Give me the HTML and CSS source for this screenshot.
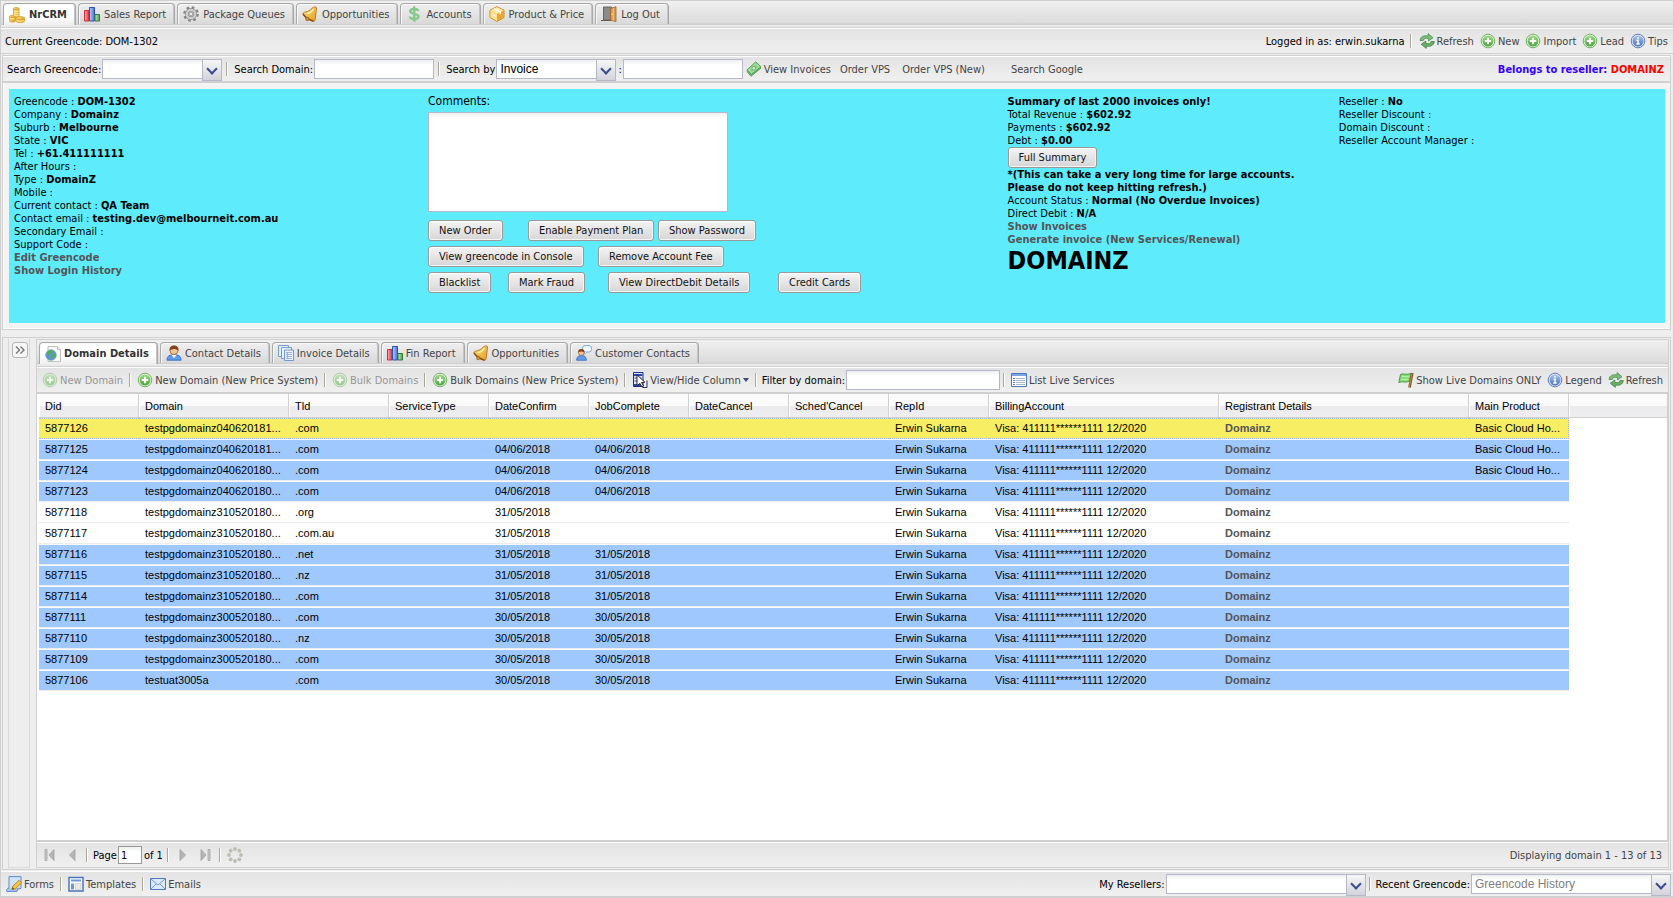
FILE: index.html
```html
<!DOCTYPE html>
<html lang="en">
<head>
<meta charset="utf-8">
<title>NrCRM</title>
<link rel="stylesheet" href="styles.css">
</head>
<body>
<svg class="sprite" aria-hidden="true">
  <defs>
    <linearGradient id="gold" x1="0" y1="0" x2="1" y2="1"><stop offset="0" stop-color="#ffe68a"/><stop offset="1" stop-color="#dd9a1c"/></linearGradient>
    <linearGradient id="green" x1="0" y1="0" x2="0" y2="1"><stop offset="0" stop-color="#9ddb8a"/><stop offset="1" stop-color="#4ea63c"/></linearGradient>
    <linearGradient id="blue" x1="0" y1="0" x2="0" y2="1"><stop offset="0" stop-color="#a9c3ee"/><stop offset="1" stop-color="#4a74bd"/></linearGradient>
    <linearGradient id="redbar" x1="0" y1="0" x2="1" y2="0"><stop offset="0" stop-color="#ffb0b0"/><stop offset="1" stop-color="#e0303c"/></linearGradient>
    <linearGradient id="bluebar" x1="0" y1="0" x2="1" y2="0"><stop offset="0" stop-color="#b5d0ff"/><stop offset="1" stop-color="#4a70d0"/></linearGradient>
    <linearGradient id="greenbar" x1="0" y1="0" x2="1" y2="0"><stop offset="0" stop-color="#c0e8b8"/><stop offset="1" stop-color="#4f9f52"/></linearGradient>
  </defs>
  <symbol id="coins" viewBox="0 0 16 16"><g fill="url(#gold)" stroke="#d6a02c" stroke-width=".8"><path d="M4.500 1.800v11.700h5.500V1.800z"/><ellipse cx="7.200" cy="1.800" rx="2.800" ry="1.300"/><path d="M.6 9.500v4.700c0 1.200 5.600 1.200 5.600 0V9.500z"/><ellipse cx="3.400" cy="9.500" rx="2.800" ry="1.200"/><path d="M7 11.300v2.900c0 1.700 8.500 1.700 8.500 0v-2.900z"/><ellipse cx="11.200" cy="11.200" rx="4.300" ry="1.700"/></g><path d="M5 4.300h4.500M5 6.300h4.500M5 8.300h4.500M1 11.800h4.500M7.500 13.600c2 .7 5.500.7 7.500 0" stroke="#fff0a8" stroke-width=".8" fill="none"/></symbol>
  <symbol id="chart" viewBox="0 0 16 16"><path d="M.5 4.500h4.500v10.500H.5z" fill="url(#redbar)" stroke="#c9303c"/><path d="M5.500 1.500h5v13.500h-5z" fill="url(#bluebar)" stroke="#2c4fb4"/><path d="M11 8.500h4.500v6.500H11z" fill="url(#greenbar)" stroke="#2d7f3a"/></symbol>
  <symbol id="gear" viewBox="0 0 16 16"><circle cx="8" cy="8" r="6.500" fill="none" stroke="#858585" stroke-width="2.600" stroke-dasharray="2.500 2.600"/><circle cx="8" cy="8" r="4.200" fill="none" stroke="#8c8c8c" stroke-width="3.600"/><circle cx="8" cy="8" r="4.200" fill="none" stroke="#cfcfcf" stroke-width="2.200"/><circle cx="8" cy="8" r="1.900" fill="#eee" stroke="#858585" stroke-width=".8"/></symbol>
  <symbol id="bell" viewBox="0 0 16 16"><path d="M12.500 1c1.700-.4 2.500.6 1.900 2l-1 9.500c-.2 1.900-.8 2.900-1.900 2.700C7.500 14.200 3 11.200 1 8c-.4-1.400.9-1.700 2.500-2C6.500 5.300 8 4.300 10 2.300c.8-.8 1.600-1.200 2.500-1.300z" fill="url(#gold)" stroke="#b9741a" stroke-width=".9"/><path d="M1 8c2.300 3.300 6 6 10.500 7.200" fill="none" stroke="#8b4d10" stroke-width="1.500"/><path d="M11.500 3.300C10 5.500 7.800 6.900 5.300 7.500" fill="none" stroke="#fff4bb" stroke-width="1.300"/><circle cx="5.300" cy="13" r="1.700" fill="#d89128" stroke="#92560f" stroke-width=".7"/></symbol>
  <symbol id="dollar" viewBox="0 0 16 16"><path d="M12.300 5C12 2.400 4.300 2.200 4.300 5.300c0 3.200 8.300 2 8.300 5.300 0 3.400-8.300 3-8.800 0M8.200.3v15.500" fill="none" stroke="#86c98c" stroke-width="2.500"/></symbol>
  <symbol id="box" viewBox="0 0 16 16"><path d="M8 .7l7 3.500v7.300l-7 3.900-7-3.900V4.200z" fill="#f5c24d" stroke="#ca8b2a"/><path d="M1.500 4.500L8 8v7l-6.500-3.700z" fill="#fbdf93"/><path d="M8 8l6.500-3.500v6.800L8 15z" fill="#e9a637"/><path d="M1.500 4.300L8 1.200l6.500 3.100L8 7.700z" fill="#ffeaae"/><path d="M5 2.700l6.300 3.200v2.400M4 8.700l2.500 1.500" stroke="#fff" fill="none" stroke-width="1.200"/></symbol>
  <symbol id="door" viewBox="0 0 16 16"><path d="M2.500 1h8v13h-8z" fill="#8b8b8b" stroke="#666"/><path d="M0 14.500h11" stroke="#6d5a45"/><path d="M9.500 2.500L15 .7v14.800l-5.500-1.300z" fill="#d99a54" stroke="#9a6428" stroke-width=".8"/><path d="M12.300 2v12.500" stroke="#f3c68a"/><circle cx="11.200" cy="8.300" r=".9" fill="#ffe14f"/></symbol>
  <symbol id="refresh" viewBox="0 0 16 16"><path d="M1 7.500C1.300 3.500 5 2 9 3V.6L14 4.700 9.500 8V5.700C6.500 4.900 4.800 5.300 4.300 7.500z" fill="#7dbb7b" stroke="#3f8a45" stroke-width=".7"/><path d="M15.300 8.500c-.3 4-4 5.500-8 4.500v2.400L2.200 11.300 6.800 8v2.300c3 .8 4.700.4 5.200-1.800z" fill="#6aae69" stroke="#377c3e" stroke-width=".7"/></symbol>
  <symbol id="add" viewBox="0 0 16 16"><circle cx="8" cy="8" r="6.800" fill="#e6f3e2" stroke="#68aa5c" stroke-width=".9"/><circle cx="8" cy="8" r="5.500" fill="url(#green)"/><path d="M8 4.800v6.400M4.800 8h6.400" stroke="#fff" stroke-width="2"/></symbol>
  <symbol id="info" viewBox="0 0 16 16"><circle cx="8" cy="8" r="6.800" fill="#e2eaf7" stroke="#5273ad" stroke-width=".9"/><circle cx="8" cy="8" r="5.500" fill="url(#blue)"/><path d="M8 4v1.700M6.500 7.300H8v3.500M6.300 11h3.400" stroke="#fff" stroke-width="1.500" fill="none"/></symbol>
  <symbol id="money" viewBox="0 0 16 16"><path d="M1 10.500L10 2l5 5L5 15.300z" fill="#7dbf7a" stroke="#438f45" stroke-width=".8"/><path d="M.8 9L9.800.8l5.200 5-9.600 7.700z" fill="#8fce8b" stroke="#4b9a4c" stroke-width=".8"/><path d="M3 9l6.700-6.200L12.800 6l-7.200 5.500z" fill="none" stroke="#c5eac2" stroke-width=".7"/><circle cx="7.800" cy="7.200" r="1.900" fill="#c7ecc4" stroke="#5aa85a" stroke-width=".8"/></symbol>
  <symbol id="page-globe" viewBox="0 0 16 16"><path d="M3 .6h9.500l3 3v11.800H3z" fill="#fff" stroke="#bbb"/><path d="M12.500.6v3h3" fill="#eee" stroke="#bbb"/><circle cx="6" cy="9" r="5.300" fill="#5d94d6" stroke="#7aa6a6" stroke-width=".8"/><path d="M3 5.500c2-1.500 4-.8 5 0l-1 2-2.500.5L3.500 10 2 7zM8 8.500l2.600-.7-.3 3.300-2.300 2L7 11z" fill="#52b04b"/></symbol>
  <symbol id="user" viewBox="0 0 16 16"><path d="M1 15.200C1 10.500 4 9.800 8 9.800s7 .7 7 5.400z" fill="#5d9bec" stroke="#2c62b6" stroke-width=".8"/><path d="M5.500 10h5L8 13.200z" fill="#f4f8ff"/><circle cx="8" cy="5.500" r="4" fill="#f3c393" stroke="#8c5221" stroke-width=".7"/><path d="M3.700 6C3 1.800 5.500.5 8 .5s5.200 1.400 4.400 5.500C11 4.300 9 3.900 7 4.200 5.500 4.300 4.300 4.900 3.700 6z" fill="#834316"/></symbol>
  <symbol id="pages" viewBox="0 0 16 16"><g fill="#e9f1fc" stroke="#7398d3"><path d="M.5.5h10v11H.5z"/><path d="M3.500 2.500h10v11h-10z"/><path d="M6.500 5h9v10.500h-9z"/></g><path d="M8 7.500h6M8 9.500h6M8 11.500h6M8 13.500h6M9.500 7v7" stroke="#89abdc" stroke-width=".8"/></symbol>
  <symbol id="talk" viewBox="0 0 16 16"><rect x="6.500" y=".6" width="9" height="6.400" rx="2.500" fill="#eef6ff" stroke="#82a9d4"/><path d="M9 6.500L8.500 9.300l3-2.600" fill="#eef6ff" stroke="#82a9d4" stroke-width=".7"/><path d="M.7 15.300c0-3.800 2-4.800 4.800-4.800s4.800 1 4.800 4.800z" fill="#5d9bec" stroke="#2c62b6" stroke-width=".7"/><circle cx="5.300" cy="7.600" r="2.900" fill="#f3c393" stroke="#8c5221" stroke-width=".6"/><path d="M2.300 7.500C1.800 5 3.300 4 5.300 4s3.500 1 3 3.500C6.300 6 4.300 6 2.300 7.500z" fill="#834316"/></symbol>
  <symbol id="columns" viewBox="0 0 16 16"><path d="M1.500.5H11v14H1.500z" fill="#dfe5ff" stroke="#1c2e8e"/><path d="M2 2h8.500v2H2zM2 12h8.500v2H2z" fill="#2f48ae"/><path d="M2.500 6h7M2.500 9h7" stroke="#3a54b8" stroke-width="1.200"/><path d="M5 2.800l7.800 7.400-3.200.3 1.900 3.600-1.700.8-1.800-3.500L5 13.600z" fill="#fff" stroke="#111" stroke-width=".9"/><path d="M10.500 15.500H15V8.500" fill="none" stroke="#26346f"/></symbol>
  <symbol id="list" viewBox="0 0 16 16"><path d="M.5 1.500h15v13H.5z" fill="#fff" stroke="#4c78bd"/><path d="M1 2h14v2H1z" fill="#7ba4e0"/><path d="M2 6.500h2M2 8.500h2M2 10.500h2M2 12.500h2" stroke="#4d84d6"/><path d="M5 6.500h9M5 8.500h9M5 10.500h9M5 12.500h9" stroke="#a9b6c9"/></symbol>
  <symbol id="flag" viewBox="0 0 16 16"><path d="M2.500 2.500C5 .8 8 3.500 13 1.500L11.300 9.300C7.500 11.200 4.500 8.800.8 10.500z" fill="#86da78" stroke="#3f9440" stroke-width=".9"/><path d="M4 4.500c2-.6 4.500 1 7.500-.3M3.300 7.300c2-.4 4 .8 6.500 0" stroke="#c5f3bc" fill="none"/><path d="M14.300 1L11.500 15.500" stroke="#7f5220" stroke-width="2.600"/><path d="M14 1.500L11.400 15" stroke="#c58b47"/></symbol>
  <symbol id="form" viewBox="0 0 16 16"><path d="M3 .6h12v11.900L3 14z" fill="#cfe2f8" stroke="#5a8dc6"/><path d="M3 12c-2 .5-3 2-2.200 3.400H11l1-2.500" fill="#a8c8ee" stroke="#5a8dc6"/><path d="M6 13.500L6.800 10 13 4.300l2.500 2.500L9.300 13z" fill="#f6c443" stroke="#b97b16" stroke-width=".8"/><path d="M6 13.500l.6-2.500 1.800 1.900z" fill="#6d4a1a"/></symbol>
  <symbol id="template" viewBox="0 0 16 16"><path d="M1 1.500h14v13.500H1z" fill="#fff" stroke="#4a76ba" stroke-width="1.500"/><path d="M3 3.500h10v2H3zM3 7.500h3v6H3z" fill="#6b97dc"/><path d="M7.500 7.500h5.500v6H7.500z" fill="#ecebe7" stroke="#bbb" stroke-width=".6"/></symbol>
  <symbol id="mail" viewBox="0 0 16 16"><path d="M.5 2.500h15v11H.5z" fill="#dce9fb" stroke="#4f79bd"/><path d="M1 3l7 6 7-6M1 13l5-5M15 13l-5-5" fill="none" stroke="#7298d4"/></symbol>
  <symbol id="first" viewBox="0 0 16 16"><path d="M3 2.500h2v11H3z" fill="#c9c9c9" stroke="#9b9b9b" stroke-width=".7"/><path d="M12 2.500v11L7 8z" fill="#b5b5b5" stroke="#999" stroke-width=".7"/></symbol>
  <symbol id="prev" viewBox="0 0 16 16"><path d="M11 2.500v11L5.500 8z" fill="#b5b5b5" stroke="#999" stroke-width=".7"/></symbol>
  <symbol id="next" viewBox="0 0 16 16"><path d="M5 2.500v11L10.500 8z" fill="#b5b5b5" stroke="#999" stroke-width=".7"/></symbol>
  <symbol id="last" viewBox="0 0 16 16"><path d="M11 2.500h2v11h-2z" fill="#c9c9c9" stroke="#9b9b9b" stroke-width=".7"/><path d="M4 2.500v11L9 8z" fill="#b5b5b5" stroke="#999" stroke-width=".7"/></symbol>
  <symbol id="loading" viewBox="0 0 16 16"><g fill="#bdbdb4"><circle cx="8" cy="2" r="1.900"/><circle cx="12.300" cy="3.700" r="1.900"/><circle cx="14" cy="8" r="1.900"/><circle cx="12.300" cy="12.300" r="1.900"/><circle cx="8" cy="14" r="1.900"/><circle cx="3.700" cy="12.300" r="1.900"/><circle cx="2" cy="8" r="1.900"/><circle cx="3.700" cy="3.700" r="1.900"/></g></symbol>
  <symbol id="expand" viewBox="0 0 16 16"><rect x=".5" y=".5" width="15" height="15" rx="2.500" fill="#f6f6f6" stroke="#b4b4b4"/><path d="M4 4.500L7.500 8 4 11.500M8.500 4.500L12 8l-3.500 3.500" fill="none" stroke="#777" stroke-width="1.400"/></symbol>
</svg>

<div class="app">
  <nav class="tabs">
    <button class="tab active"><svg class="icon"><use href="#coins"/></svg>NrCRM</button>
    <button class="tab"><svg class="icon"><use href="#chart"/></svg>Sales Report</button>
    <button class="tab"><svg class="icon"><use href="#gear"/></svg>Package Queues</button>
    <button class="tab"><svg class="icon"><use href="#bell"/></svg>Opportunities</button>
    <button class="tab"><svg class="icon"><use href="#dollar"/></svg>Accounts</button>
    <button class="tab"><svg class="icon"><use href="#box"/></svg>Product &amp; Price</button>
    <button class="tab"><svg class="icon"><use href="#door"/></svg>Log Out</button>
  </nav>

  <div class="toolbar">
    <span class="text">Current Greencode:</span><span class="text">DOM-1302</span>
    <span class="fill"></span>
    <span class="text">Logged in as:</span><span class="text">erwin.sukarna</span>
    <i class="sep"></i>
    <button class="btn"><svg class="icon"><use href="#refresh"/></svg>Refresh</button>
    <button class="btn"><svg class="icon"><use href="#add"/></svg>New</button>
    <button class="btn"><svg class="icon"><use href="#add"/></svg>Import</button>
    <button class="btn"><svg class="icon"><use href="#add"/></svg>Lead</button>
    <button class="btn"><svg class="icon"><use href="#info"/></svg>Tips</button>
  </div>

  <div class="center">
    <section class="customer">
      <div class="toolbar heavy">
        <label class="text" for="s-green">Search Greencode:</label>
        <span class="combo"><select id="s-green"><option></option></select></span>
        <i class="sep"></i>
        <label class="text" for="s-domain">Search Domain:</label>
        <input class="field" id="s-domain" type="text">
        <i class="sep"></i>
        <label class="text" for="s-by">Search by</label>
        <span class="combo"><select id="s-by"><option>Invoice</option></select></span>
        <label class="text" for="s-value">:</label>
        <input class="field" id="s-value" type="text">
        <button class="btn"><svg class="icon"><use href="#money"/></svg>View Invoices</button>
        <button class="btn plain">Order VPS</button>
        <button class="btn plain">Order VPS (New)</button>
        <button class="btn plain spaced">Search Google</button>
        <span class="fill"></span>
        <span class="reseller">Belongs to reseller: <em>DOMAINZ</em></span>
      </div>
      <div class="summary">
        <div class="summary-body">
          <div class="info">
            <div>Greencode : <b>DOM-1302</b></div>
            <div>Company : <b>Domainz</b></div>
            <div>Suburb : <b>Melbourne</b></div>
            <div>State : <b>VIC</b></div>
            <div>Tel : <b>+61.411111111</b></div>
            <div>After Hours :</div>
            <div>Type : <b>DomainZ</b></div>
            <div>Mobile :</div>
            <div>Current contact : <b>QA Team</b></div>
            <div>Contact email : <b>testing.dev@melbourneit.com.au</b></div>
            <div>Secondary Email :</div>
            <div>Support Code :</div>
            <div><a href="#edit">Edit Greencode</a></div>
            <div><a href="#history">Show Login History</a></div>
          </div>
          <div class="actions">
            <label for="comments">Comments:</label>
            <textarea id="comments"></textarea>
            <div class="row orders"><button class="push">New Order</button><button class="push">Enable Payment Plan</button><button class="push">Show Password</button></div>
            <div class="row console"><button class="push">View greencode in Console</button><button class="push">Remove Account Fee</button></div>
            <div class="row billing"><button class="push">Blacklist</button><button class="push">Mark Fraud</button><button class="push">View DirectDebit Details</button><button class="push">Credit Cards</button></div>
          </div>
          <div class="info">
            <div><b>Summary of last 2000 invoices only!</b></div>
            <div>Total Revenue : <b>$602.92</b></div>
            <div>Payments : <b>$602.92</b></div>
            <div>Debt : <b>$0.00</b></div>
            <button class="push">Full Summary</button>
            <div><b>*(This can take a very long time for large accounts.<br>Please do not keep hitting refresh.)</b></div>
            <div>Account Status : <b>Normal (No Overdue Invoices)</b></div>
            <div>Direct Debit : <b>N/A</b></div>
            <div><a href="#invoices">Show Invoices</a></div>
            <div><a href="#generate">Generate invoice (New Services/Renewal)</a></div>
            <h1>DOMAINZ</h1>
          </div>
          <div class="info">
            <div>Reseller : <b>No</b></div>
            <div>Reseller Discount :</div>
            <div>Domain Discount :</div>
            <div>Reseller Account Manager :</div>
          </div>
        </div>
      </div>
    </section>

    <section class="details">
      <aside class="collapsed"><button class="expander" aria-label="Expand"><svg class="icon"><use href="#expand"/></svg></button></aside>
      <div class="main">
        <nav class="tabs">
          <button class="tab active"><svg class="icon"><use href="#page-globe"/></svg>Domain Details</button>
          <button class="tab"><svg class="icon"><use href="#user"/></svg>Contact Details</button>
          <button class="tab"><svg class="icon"><use href="#pages"/></svg>Invoice Details</button>
          <button class="tab"><svg class="icon"><use href="#chart"/></svg>Fin Report</button>
          <button class="tab"><svg class="icon"><use href="#bell"/></svg>Opportunities</button>
          <button class="tab"><svg class="icon"><use href="#talk"/></svg>Customer Contacts</button>
        </nav>
        <div class="toolbar heavy">
          <button class="btn" disabled><svg class="icon"><use href="#add"/></svg>New Domain</button>
          <i class="sep"></i>
          <button class="btn"><svg class="icon"><use href="#add"/></svg>New Domain (New Price System)</button>
          <i class="sep"></i>
          <button class="btn" disabled><svg class="icon"><use href="#add"/></svg>Bulk Domains</button>
          <i class="sep"></i>
          <button class="btn"><svg class="icon"><use href="#add"/></svg>Bulk Domains (New Price System)</button>
          <i class="sep"></i>
          <button class="btn menu"><svg class="icon"><use href="#columns"/></svg>View/Hide Column</button>
          <i class="sep"></i>
          <label class="text" for="filter">Filter by domain:</label>
          <input class="field filter" id="filter" type="text">
          <i class="sep"></i>
          <button class="btn"><svg class="icon"><use href="#list"/></svg>List Live Services</button>
          <span class="fill"></span>
          <button class="btn"><svg class="icon"><use href="#flag"/></svg>Show Live Domains ONLY</button>
          <button class="btn"><svg class="icon"><use href="#info"/></svg>Legend</button>
          <button class="btn"><svg class="icon"><use href="#refresh"/></svg>Refresh</button>
        </div>
        <div class="grid">
          <table>
            <colgroup><col class="w100"><col class="w150"><col class="w100" span="7"><col class="w230"><col class="w250"><col class="w100"><col></colgroup>
            <thead><tr><th>Did</th><th>Domain</th><th>Tld</th><th>ServiceType</th><th>DateConfirm</th><th>JobComplete</th><th>DateCancel</th><th>Sched'Cancel</th><th>RepId</th><th>BillingAccount</th><th>Registrant Details</th><th>Main Product</th><td></td></tr></thead>
            <tbody>
              <tr class="selected"><td>5877126</td><td>testpgdomainz040620181...</td><td>.com</td><td></td><td></td><td></td><td></td><td></td><td>Erwin Sukarna</td><td>Visa: 411111******1111 12/2020</td><td><a href="#r">Domainz</a></td><td>Basic Cloud Ho...</td><td></td></tr>
              <tr class="done"><td>5877125</td><td>testpgdomainz040620181...</td><td>.com</td><td></td><td>04/06/2018</td><td>04/06/2018</td><td></td><td></td><td>Erwin Sukarna</td><td>Visa: 411111******1111 12/2020</td><td><a href="#r">Domainz</a></td><td>Basic Cloud Ho...</td><td></td></tr>
              <tr class="done"><td>5877124</td><td>testpgdomainz040620180...</td><td>.com</td><td></td><td>04/06/2018</td><td>04/06/2018</td><td></td><td></td><td>Erwin Sukarna</td><td>Visa: 411111******1111 12/2020</td><td><a href="#r">Domainz</a></td><td>Basic Cloud Ho...</td><td></td></tr>
              <tr class="done"><td>5877123</td><td>testpgdomainz040620180...</td><td>.com</td><td></td><td>04/06/2018</td><td>04/06/2018</td><td></td><td></td><td>Erwin Sukarna</td><td>Visa: 411111******1111 12/2020</td><td><a href="#r">Domainz</a></td><td></td><td></td></tr>
              <tr><td>5877118</td><td>testpgdomainz310520180...</td><td>.org</td><td></td><td>31/05/2018</td><td></td><td></td><td></td><td>Erwin Sukarna</td><td>Visa: 411111******1111 12/2020</td><td><a href="#r">Domainz</a></td><td></td><td></td></tr>
              <tr><td>5877117</td><td>testpgdomainz310520180...</td><td>.com.au</td><td></td><td>31/05/2018</td><td></td><td></td><td></td><td>Erwin Sukarna</td><td>Visa: 411111******1111 12/2020</td><td><a href="#r">Domainz</a></td><td></td><td></td></tr>
              <tr class="done"><td>5877116</td><td>testpgdomainz310520180...</td><td>.net</td><td></td><td>31/05/2018</td><td>31/05/2018</td><td></td><td></td><td>Erwin Sukarna</td><td>Visa: 411111******1111 12/2020</td><td><a href="#r">Domainz</a></td><td></td><td></td></tr>
              <tr class="done"><td>5877115</td><td>testpgdomainz310520180...</td><td>.nz</td><td></td><td>31/05/2018</td><td>31/05/2018</td><td></td><td></td><td>Erwin Sukarna</td><td>Visa: 411111******1111 12/2020</td><td><a href="#r">Domainz</a></td><td></td><td></td></tr>
              <tr class="done"><td>5877114</td><td>testpgdomainz310520180...</td><td>.com</td><td></td><td>31/05/2018</td><td>31/05/2018</td><td></td><td></td><td>Erwin Sukarna</td><td>Visa: 411111******1111 12/2020</td><td><a href="#r">Domainz</a></td><td></td><td></td></tr>
              <tr class="done"><td>5877111</td><td>testpgdomainz300520180...</td><td>.com</td><td></td><td>30/05/2018</td><td>30/05/2018</td><td></td><td></td><td>Erwin Sukarna</td><td>Visa: 411111******1111 12/2020</td><td><a href="#r">Domainz</a></td><td></td><td></td></tr>
              <tr class="done"><td>5877110</td><td>testpgdomainz300520180...</td><td>.nz</td><td></td><td>30/05/2018</td><td>30/05/2018</td><td></td><td></td><td>Erwin Sukarna</td><td>Visa: 411111******1111 12/2020</td><td><a href="#r">Domainz</a></td><td></td><td></td></tr>
              <tr class="done"><td>5877109</td><td>testpgdomainz300520180...</td><td>.com</td><td></td><td>30/05/2018</td><td>30/05/2018</td><td></td><td></td><td>Erwin Sukarna</td><td>Visa: 411111******1111 12/2020</td><td><a href="#r">Domainz</a></td><td></td><td></td></tr>
              <tr class="done"><td>5877106</td><td>testuat3005a</td><td>.com</td><td></td><td>30/05/2018</td><td>30/05/2018</td><td></td><td></td><td>Erwin Sukarna</td><td>Visa: 411111******1111 12/2020</td><td><a href="#r">Domainz</a></td><td></td><td></td></tr>
            </tbody>
          </table>
        </div>
        <div class="toolbar paging">
          <button class="btn" aria-label="First page"><svg class="icon"><use href="#first"/></svg></button>
          <button class="btn" aria-label="Previous page"><svg class="icon"><use href="#prev"/></svg></button>
          <i class="sep"></i>
          <label class="text" for="page">Page</label><input class="page" id="page" type="text" value="1"><span class="text">of 1</span>
          <i class="sep"></i>
          <button class="btn" aria-label="Next page"><svg class="icon"><use href="#next"/></svg></button>
          <button class="btn" aria-label="Last page"><svg class="icon"><use href="#last"/></svg></button>
          <i class="sep"></i>
          <button class="btn" aria-label="Reload"><svg class="icon"><use href="#loading"/></svg></button>
          <span class="fill"></span>
          <span class="count">Displaying domain 1 - 13 of 13</span>
        </div>
      </div>
    </section>
  </div>

  <div class="toolbar bottom">
    <button class="btn"><svg class="icon"><use href="#form"/></svg>Forms</button>
    <i class="sep"></i>
    <button class="btn"><svg class="icon"><use href="#template"/></svg>Templates</button>
    <i class="sep"></i>
    <button class="btn"><svg class="icon"><use href="#mail"/></svg>Emails</button>
    <span class="fill"></span>
    <label class="text" for="resellers">My Resellers:</label>
    <span class="combo wide"><select id="resellers"><option></option></select></span>
    <i class="sep"></i>
    <label class="text" for="recent">Recent Greencode:</label>
    <span class="combo wide hint"><select id="recent"><option>Greencode History</option></select></span>
  </div>
</div>
</body>
</html>
```
FILE: styles.css
```css
* { box-sizing: border-box; }

body {
  margin: 0;
  background: #f0f0f0;
  color: #000;
  font: 11px/13px Tahoma, "DejaVu Sans Condensed", "DejaVu Sans", sans-serif;
}

button, input, select, textarea { font: inherit; color: inherit; margin: 0; }
button { white-space: nowrap; }
a { color: #555; font-weight: bold; text-decoration: none; }

.sprite { position: absolute; width: 0; height: 0; }
.icon { width: 16px; height: 16px; flex: none; }
.fill { flex: 1; }

.app {
  display: flex;
  flex-direction: column;
  min-height: 100vh;
  border: 1px solid #d0d0d0;
}

/* Tab strips */
.tabs {
  display: flex;
  gap: 2px;
  height: 27px;
  padding: 2px 2px 0;
  background: linear-gradient(#f0f0f0, #dcdcdc 22px, #d0d0d0 23px, #d0d0d0 24px, #eaeaea 24px);
  border-bottom: 1px solid #d0d0d0;
}
.tab {
  display: flex;
  align-items: center;
  gap: 4px;
  height: 21px;
  padding: 0 8px 0 5px;
  border: 1px solid #a9a9a9;
  border-bottom: 0;
  border-radius: 4px 4px 0 0;
  box-shadow: inset 1px 1px #f8f8f8, inset -1px 0 #c4c4c4;
  background: linear-gradient(#efefef, #d9d9d9);
  color: #444;
}
.tab.active {
  height: 22px;
  background: linear-gradient(#fff 60%, #eee);
  color: #333;
  font-weight: bold;
}
.details .tab { gap: 3px; }

/* Toolbars */
.toolbar {
  display: flex;
  align-items: center;
  height: 26px;
  padding: 0 2px;
  border-top: 1px solid #fff;
  border-bottom: 1px solid #d0d0d0;
  background: linear-gradient(#e3e3e3, #f0f0f0);
}
.toolbar.heavy { height: 27px; border-bottom-width: 2px; }
.toolbar.paging { height: 25px; border-bottom: 0; }
.text { padding: 0 1px 0 2px; white-space: nowrap; }
.sep {
  width: 2px;
  height: 14px;
  margin: 0 4px;
  border-left: 1px solid #aca899;
  border-right: 1px solid #fff;
}
.details .sep, .bottom .sep { margin: 0 3px; }
.btn {
  display: flex;
  align-items: center;
  gap: 2px;
  padding: 0 3px;
  border: 0;
  background: none;
  color: #444;
}
.btn.plain { padding: 0 6px; }
.btn.spaced { margin-left: 14px; }
.btn:disabled { opacity: .5; }
.btn.menu::after {
  content: "";
  border: 3px solid transparent;
  border-top: 4px solid #3a4c6c;
  border-bottom: 0;
}
.reseller { padding-right: 4px; color: #30f; font-weight: bold; }
.reseller em { color: #f00; font-style: normal; }

.field, .combo select, textarea, .page {
  border: 1px solid #b5b8c8;
  border-radius: 0;
  background: linear-gradient(#eef0f0, #fff 5px);
}
.field { width: 120px; height: 20px; padding: 0 4px; }
.field.filter { width: 154px; }
.page { width: 24px; height: 18px; padding: 0 2px; border-color: #999; }
.combo { position: relative; width: 120px; height: 20px; }
.combo.wide { width: 200px; }
.combo select {
  appearance: none;
  width: 100%;
  height: 20px;
  padding: 0 20px 1px 3px;
  font: 12px/16px Arial, "Liberation Sans", sans-serif;
}
.combo.hint select { color: #808080; }
.combo::before {
  content: "";
  position: absolute;
  right: 0;
  top: 0;
  width: 18px;
  height: 20px;
  border: 1px solid #b5b8c8;
  background: linear-gradient(#f6f6f6, #d2d4da);
  pointer-events: none;
}
.combo::after {
  content: "";
  position: absolute;
  right: 6px;
  top: 6px;
  width: 6px;
  height: 6px;
  border: solid #3a4c8c;
  border-width: 0 2px 2px 0;
  transform: rotate(45deg);
  pointer-events: none;
}

/* Regions */
.center {
  flex: 1;
  display: flex;
  flex-direction: column;
  gap: 7px;
  padding: 1px 2px 1px 1px;
  background: #eee;
}
.customer, .details { border: 1px solid #d0d0d0; }
.customer { background: #f3f3f3; }
.summary { padding: 6px 5px 5px; border-left: 1px solid #fff; border-bottom: 1px solid #fff; }
.summary-body {
  display: grid;
  grid-template-columns: 25% 35% 20% 20%;
  min-height: 234px;
  padding: 6px 0;
  background: #5eecfc;
}
.info { padding-left: 5px; white-space: nowrap; }
.info h1 { margin: 0; font-size: 25px; line-height: 30px; }

.push {
  display: block;
  height: 21px;
  padding: 0 10px;
  border: 1px solid #999;
  border-radius: 3px;
  box-shadow: inset 1px 1px #fff, inset -1px -1px #f4f4f4;
  background: linear-gradient(#f4f4f4, #d6d6d6);
  color: #111;
}
.actions { padding-left: 5px; }
.actions label { display: block; margin-bottom: 4px; font-size: 12px; }
.actions textarea { display: block; width: 300px; height: 100px; margin-bottom: 8px; resize: none; }
.row { display: grid; justify-items: start; margin-bottom: 5px; }
.orders { grid-template-columns: 100px 130px auto; }
.console { grid-template-columns: 170px auto; }
.billing { grid-template-columns: 80px 100px 170px auto; }

.details { flex: 1; display: flex; padding: 1px 1px 1px 5px; gap: 6px; }
.collapsed { width: 22px; padding: 3px 0 0 3px; border: 1px solid #d8d8d8; border-top: 0; }
.expander { display: flex; padding: 0; border: 0; background: none; }
.main { flex: 1; min-width: 0; display: flex; flex-direction: column; border: 1px solid #d0d0d0; }

/* Domain grid */
.grid {
  flex: 1;
  padding-left: 2px;
  border-right: 1px solid #d0d0d0;
  border-bottom: 2px solid #d0d0d0;
  background: #fff;
  font-family: Arial, "Liberation Sans", sans-serif;
}
table { width: 100%; table-layout: fixed; border-collapse: separate; border-spacing: 0; }
.w100 { width: 100px; }
.w150 { width: 150px; }
.w230 { width: 230px; }
.w250 { width: 250px; }
thead th, thead td {
  height: 24px;
  padding: 1px 6px 0;
  border-right: 1px solid #d0d0d0;
  border-bottom: 1px solid #d0d0d0;
  box-shadow: inset 1px 0 #fff;
  background: linear-gradient(#fafafa 50%, #ebebed 51%, #eeeef0);
  font-weight: normal;
  text-align: left;
}
thead td { border-right: 0; }
tbody td {
  height: 21px;
  padding: 0 6px;
  border-top: 1px solid #fafafa;
  border-bottom: 1px solid #ededed;
  white-space: nowrap;
}
tbody td:last-child { border: 0; }
.done td:not(:last-child) { background: #9fc8ff; }
.selected td:not(:last-child) {
  border-top: 1px dotted #a3bae9;
  border-bottom: 1px dotted #a3bae9;
  background: #f7ee63;
}
.selected td:nth-child(12) { border-right: 1px dotted #a3bae9; }

.count { padding-right: 4px; color: #444; }
```
